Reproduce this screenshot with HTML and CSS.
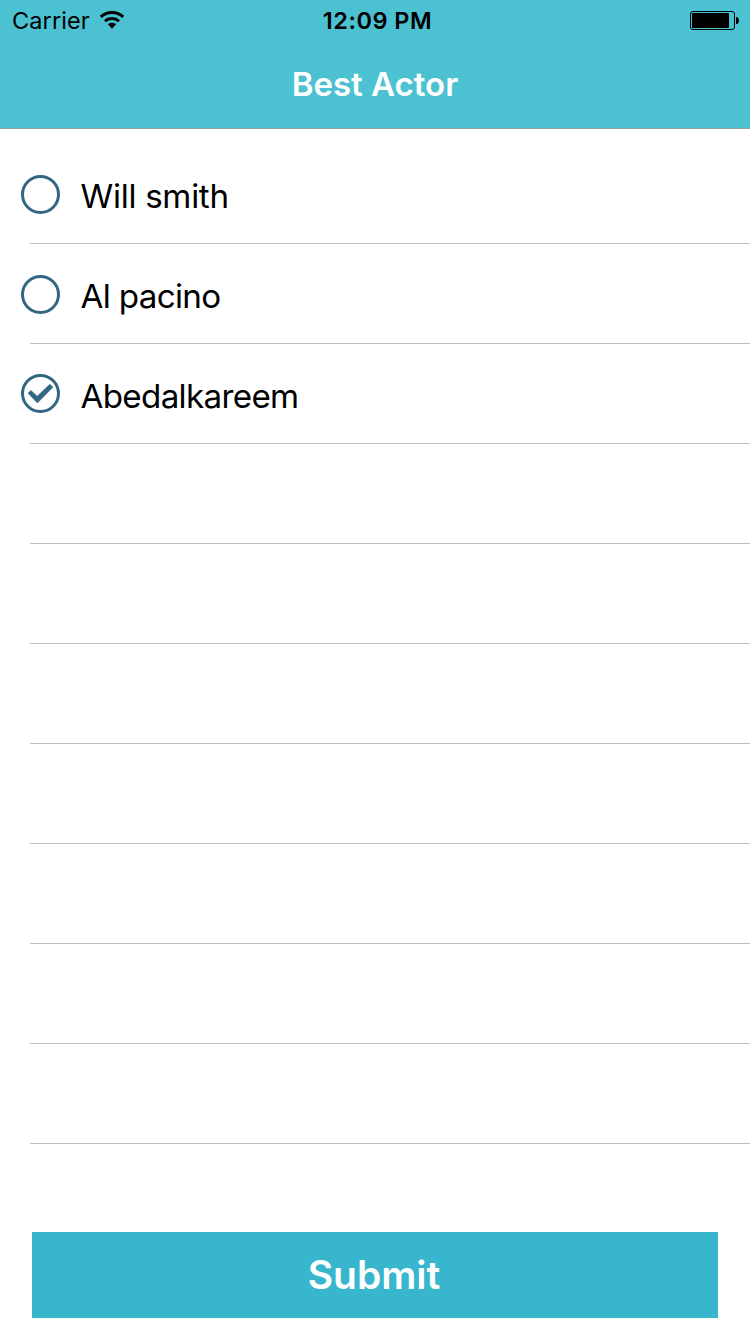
FILE: index.html
```html
<!DOCTYPE html>
<html lang="en">
<head>
<meta charset="utf-8">
<title>Best Actor</title>
<link rel="stylesheet" href="styles.css">
</head>
<body>
<div class="screen">
  <header class="header">
    <div class="status">
      <div class="status-left">
        <span class="carrier">Carrier</span>
        <svg class="wifi" width="26" height="20" viewBox="0 0 26 20">
          <path d="M1.8 6.8C8 .9 18 .9 24.2 6.8" fill="none" stroke="#000" stroke-width="3"/>
          <path d="M6 11.2C10 7.5 16 7.5 20 11.2" fill="none" stroke="#000" stroke-width="2.9"/>
          <path d="M8.9 14.2C11.2 12.2 14.8 12.2 17.100 14.2L13 18.8Z"/>
        </svg>
      </div>
      <span class="clock">12:09 PM</span>
      <svg class="battery" width="50" height="20" viewBox="0 0 50 20">
        <rect x=".5" y=".5" width="44" height="18" rx="2.5" fill="none" stroke="#000"/>
        <rect x="2" y="2" width="37" height="15" rx="1"/>
        <path d="M46 6h1q2 1 2 3.500t-2 3.500h-1z"/>
      </svg>
    </div>
    <h1 class="title">Best Actor</h1>
  </header>
  <ul class="list">
    <li class="row">
      <svg class="radio" width="41" height="41" viewBox="0 0 41 41"><circle class="ring" cx="20.500" cy="20.500" r="18"/></svg>
      <span class="name name-loose">Will smith</span>
    </li>
    <li class="row">
      <svg class="radio" width="41" height="41" viewBox="0 0 41 41"><circle class="ring" cx="20.500" cy="20.500" r="18"/></svg>
      <span class="name">Al pacino</span>
    </li>
    <li class="row">
      <svg class="radio" width="41" height="41" viewBox="0 0 41 41"><circle class="ring" cx="20.500" cy="19.500" r="18"/><path class="check" d="M8.100 19.200L10.900 16.400L17.200 22.300L29.800 10.200L32.900 13.200L17.400 29Z"/></svg>
      <span class="name">Abedalkareem</span>
    </li>
    <li class="row"></li>
    <li class="row"></li>
    <li class="row"></li>
    <li class="row"></li>
    <li class="row"></li>
    <li class="row"></li>
    <li class="row"></li>
  </ul>
  <button class="submit">Submit</button>
</div>
</body>
</html>
```
FILE: styles.css
```css
* { box-sizing: border-box; }
body {
  margin: 0;
  background: #fff;
  font-family: Inter, "Liberation Sans", sans-serif;
  color: #000;
}
.screen {
  display: flex;
  flex-direction: column;
  width: 750px;
  height: 1334px;
  overflow: hidden;
}
.header {
  height: 129px;
  background: #4cc1d2;
  border-bottom: 1px solid #91a4a7;
}
.status {
  display: grid;
  grid-template-columns: 1fr auto 1fr;
  align-items: center;
  height: 40px;
  padding: 0 10px 0 12px;
}
.status-left { display: flex; align-items: center; gap: 9.5px; }
.carrier { font-size: 23.5px; line-height: 38px; letter-spacing: .1px; padding-top: 2px; }
.wifi { display: block; }
.clock { font-size: 23.5px; font-weight: 600; line-height: 38px; letter-spacing: .5px; margin-left: 3px; padding-top: 2px; }
.battery { justify-self: end; display: block; margin-top: 2px; }
.title {
  margin: 0;
  font-size: 33px;
  font-weight: 600;
  line-height: 88px;
  text-align: center;
  color: #fff;
}
.list { margin: 0; padding: 15px 0 0; list-style: none; }
.row {
  display: flex;
  align-items: center;
  gap: 19.5px;
  height: 100px;
  padding-left: 20px;
  background: linear-gradient(#bcbcbe, #bcbcbe) 30px 100% / 720px 1px no-repeat;
}
.radio { flex: none; display: block; }
.ring { fill: none; stroke: #326682; stroke-width: 3; }
.check { fill: #326682; stroke: #326682; stroke-width: .6; stroke-linejoin: round; }
.name { font-size: 33.2px; line-height: 40px; padding-top: 3px; letter-spacing: -.68px; }
.name-loose { letter-spacing: -.3px; }
.submit {
  width: 686px;
  height: 86px;
  margin: 88px 0 0 32px;
  padding: 0 2px 0 0;
  border: 0;
  background: #38b6cd;
  color: #fff;
  font: 600 39px/86px Inter, "Liberation Sans", sans-serif;
}
```
